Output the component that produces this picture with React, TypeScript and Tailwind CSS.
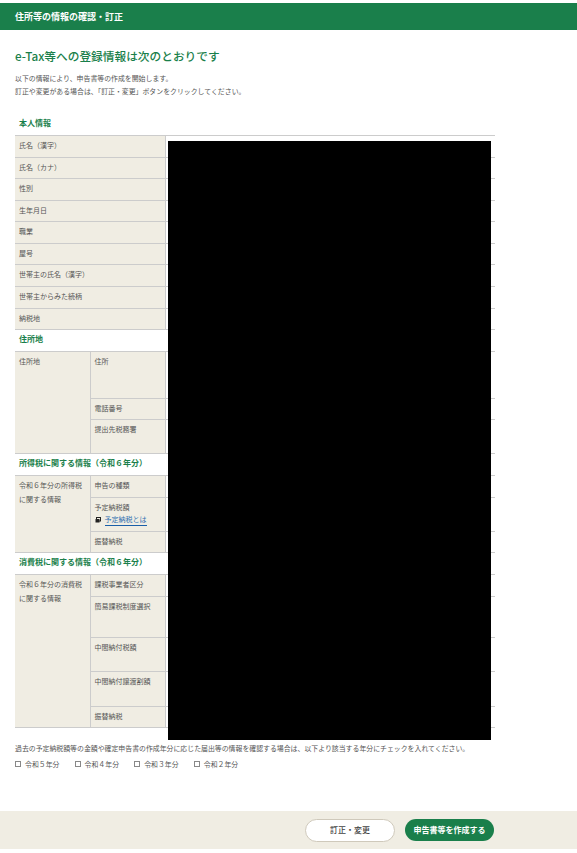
import React from "react";

const th = "border border-[#cccccc] border-l-0 bg-[#f0ede3] pl-[4px] pt-[2px] pb-0 align-top text-left font-normal text-[7px] leading-[14px] text-[#555555]";
const td = "border-y border-[#cccccc] bg-white";
const sec = "bg-white pl-[4px] pb-[3px] text-left align-middle text-[8px] font-bold text-[#1a7f4b] border-b border-[#cccccc]";

const Single = ({ h, label }: { h: number; label: string }) => (
  <tr style={{ height: h }}>
    <th colSpan={2} className={th}>{label}</th>
    <td className={td}></td>
  </tr>
);

const Section = ({ h, label }: { h: number; label: string }) => (
  <tr style={{ height: h }}>
    <th colSpan={3} className={sec}>{label}</th>
  </tr>
);

const Sub = ({ h, label, first, rows, lead }: { h: number; label: React.ReactNode; first?: boolean; rows?: number; lead?: React.ReactNode }) => (
  <tr style={{ height: h }}>
    {first && <th rowSpan={rows} className={th}>{lead}</th>}
    <th className={th}>{label}</th>
    <td className={td}></td>
  </tr>
);

const years = ["令和５年分", "令和４年分", "令和３年分", "令和２年分"];

export default function App() {
  return (
    <div className="h-[853px] w-[577px] overflow-hidden bg-white font-['Noto_Sans_CJK_JP','Noto_Sans',sans-serif]">
      <div className="pt-[3px]">
        <div className="flex h-[27px] items-center bg-[#1a7f4b] pl-[15px] text-[9px] font-bold text-white">住所等の情報の確認・訂正</div>
      </div>

      <h1 className="ml-[15px] mt-[17px] text-[11.7px] font-medium leading-[18px] text-[#1a7f4b]">e-Tax等への登録情報は次のとおりです</h1>
      <div className="ml-[15px] mt-[7px] text-[6.9px] leading-[13px] text-[#555555]">
        <p>以下の情報により、申告書等の作成を開始します。</p>
        <p>訂正や変更がある場合は、「訂正・変更」ボタンをクリックしてください。</p>
      </div>

      <div className="relative ml-[15px] mt-[12px] w-[480px]">
        <div className="flex h-[25px] items-center pl-[4px] text-[8px] font-bold text-[#1a7f4b]">本人情報</div>
        <table className="w-[480px] table-fixed border-collapse border-t border-[#cccccc]">
          <colgroup>
            <col className="w-[75px]" />
            <col className="w-[75px]" />
            <col className="w-[330px]" />
          </colgroup>
          <tbody>
            <Single h={22} label="氏名（漢字）" />
            <Single h={21} label="氏名（カナ）" />
            <Single h={22} label="性別" />
            <Single h={21} label="生年月日" />
            <Single h={22} label="職業" />
            <Single h={21} label="屋号" />
            <Single h={22} label="世帯主の氏名（漢字）" />
            <Single h={22} label="世帯主からみた続柄" />
            <Single h={21} label="納税地" />
            <Section h={22} label="住所地" />
            <Sub h={47} first rows={3} lead="住所地" label="住所" />
            <Sub h={21} label="電話番号" />
            <Sub h={34} label="提出先税務署" />
            <Section h={22} label="所得税に関する情報（令和６年分）" />
            <Sub h={22} first rows={3} lead={<>令和６年分の所得税<br />に関する情報</>} label="申告の種類" />
            <Sub
              h={34}
              label={
                <>
                  予定納税額
                  <span className="flex items-center gap-[4px] leading-[11px]">
                    <svg width="6" height="6" viewBox="0 0 6 6" className="shrink-0">
                      <rect x="1.5" y="0.5" width="4" height="3.5" fill="none" stroke="#222222" strokeWidth="1" />
                      <rect x="0.5" y="2" width="4" height="3.5" fill="#222222" />
                    </svg>
                    <span className="border-b border-[#1a5fa8] text-[#2f6db0]">予定納税とは</span>
                  </span>
                </>
              }
            />
            <Sub h={21} label="振替納税" />
            <Section h={22} label="消費税に関する情報（令和６年分）" />
            <Sub h={22} first rows={5} lead={<>令和６年分の消費税<br />に関する情報</>} label="課税事業者区分" />
            <Sub h={41} label="簡易課税制度選択" />
            <Sub h={34} label="中間納付税額" />
            <Sub h={35} label="中間納付譲渡割額" />
            <Sub h={21} label="振替納税" />
          </tbody>
        </table>
        <div className="absolute left-[153px] top-[31px] h-[599px] w-[323px] bg-black"></div>
      </div>

      <p className="ml-[15px] mt-[15px] text-[6.9px] leading-[10px] text-[#555555]">過去の予定納税額等の金額や確定申告書の作成年分に応じた届出等の情報を確認する場合は、以下より該当する年分にチェックを入れてください。</p>
      <div className="ml-[15px] mt-[6px] flex h-[10px] items-center">
        {years.map((y) => (
          <label key={y} className="flex w-[59.6px] items-center gap-[4px] text-[6.9px] text-[#555555]">
            <span className="h-[6px] w-[6px] shrink-0 border border-[#888888] bg-white"></span>
            {y}
          </label>
        ))}
      </div>

      <div className="mt-[42px] flex h-[38px] items-center justify-end gap-[10px] bg-[#f0ede3] pr-[83px]">
        <button className="h-[23px] w-[90px] rounded-full border border-[#cfc9bb] bg-white text-[8px] font-medium text-[#444444]">訂正・変更</button>
        <button className="h-[22px] w-[89px] rounded-full bg-[#1a7f4b] text-[8px] font-bold text-white">申告書等を作成する</button>
      </div>
    </div>
  );
}
